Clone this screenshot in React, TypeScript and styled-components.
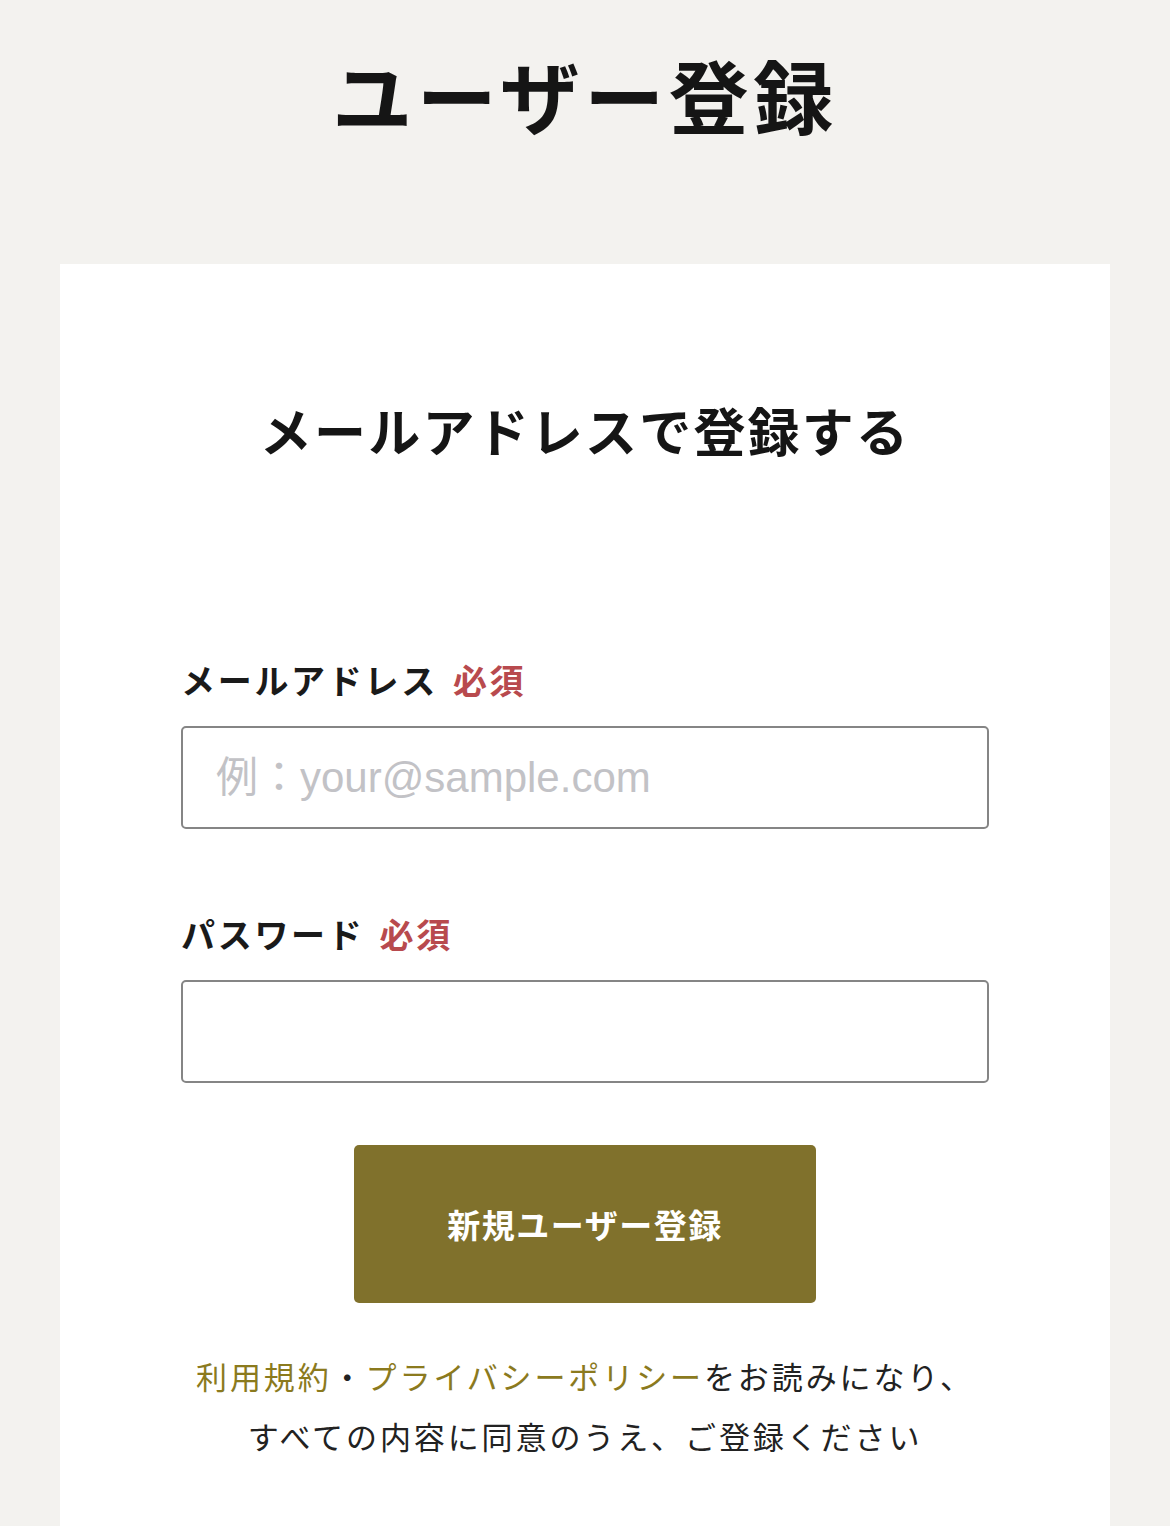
import styled, { createGlobalStyle } from "styled-components";

const GlobalStyle = createGlobalStyle`
  * {
    box-sizing: border-box;
  }

  body {
    margin: 0;
    background: #f3f2ef;
    font-family: "Noto Sans CJK JP", "Noto Sans", sans-serif;
    color: #1a1a1a;
  }
`;

const Register = () => {
  return (
    <Page>
      <GlobalStyle />
      <Title>ユーザー登録</Title>

      <Card>
        <SubTitle>メールアドレスで登録する</SubTitle>

        <Form onSubmit={(e) => e.preventDefault()}>
          <Field>
            <Label htmlFor="email">
              メールアドレス<Required>必須</Required>
            </Label>
            <Input id="email" type="email" placeholder="例：your@sample.com" />
          </Field>

          <Field>
            <Label htmlFor="password">
              パスワード<Required>必須</Required>
            </Label>
            <Input id="password" type="password" />
          </Field>

          <SubmitButton type="submit">新規ユーザー登録</SubmitButton>
        </Form>

        <Terms>
          <a href="#!">利用規約</a>・<a href="#!">プライバシーポリシー</a>
          をお読みになり、
          <br />
          すべての内容に同意のうえ、ご登録ください
        </Terms>
      </Card>
    </Page>
  );
};

export default function App() {
  return <Register />;
}

const Page = styled.main`
  min-height: 1526px;
  padding-top: 51px;
  display: flex;
  flex-direction: column;
`;

const Title = styled.h1`
  margin: 0;
  font-size: 80px;
  line-height: 84px;
  font-weight: 700;
  letter-spacing: 4.5px;
  text-align: center;
  color: #151515;
`;

const Card = styled.section`
  flex: 1;
  margin: 129px 60px 0;
  padding: 136px 121px 60px;
  background: #ffffff;
`;

const SubTitle = styled.h2`
  margin: 0;
  font-size: 52px;
  line-height: 60px;
  font-weight: 700;
  letter-spacing: 2.2px;
  text-align: center;
  color: #151515;
`;

const Form = styled.form`
  margin-top: 200px;
  display: flex;
  flex-direction: column;
`;

const Field = styled.div`
  display: flex;
  flex-direction: column;
  gap: 26px;

  & + & {
    margin-top: 85px;
  }
`;

const Label = styled.label`
  display: flex;
  align-items: center;
  gap: 15px;
  font-size: 34px;
  line-height: 40px;
  font-weight: 700;
  letter-spacing: 2.7px;
  color: #1a1a1a;
`;

const Required = styled.span`
  color: #b84a4e;
`;

const Input = styled.input`
  width: 100%;
  height: 103px;
  padding: 0 33px;
  border: 2px solid #858585;
  border-radius: 5px;
  background: #ffffff;
  font-family: "Liberation Sans", "Noto Sans CJK JP", sans-serif;
  font-size: 42px;
  color: #222;
  outline: none;

  &::placeholder {
    color: #c2c2c6;
  }
`;

const SubmitButton = styled.button`
  align-self: center;
  width: 462px;
  height: 158px;
  margin-top: 62px;
  border: none;
  border-radius: 5px;
  background: #80712c;
  color: #ffffff;
  font-family: "Noto Sans CJK JP", sans-serif;
  font-size: 33px;
  font-weight: 700;
  letter-spacing: 1.5px;
  cursor: pointer;
`;

const Terms = styled.p`
  margin: 43px 0 0;
  font-size: 31px;
  line-height: 60px;
  letter-spacing: 2.9px;
  text-align: center;
  color: #222;

  a {
    color: #8b7a1e;
    text-decoration: none;
  }
`;
